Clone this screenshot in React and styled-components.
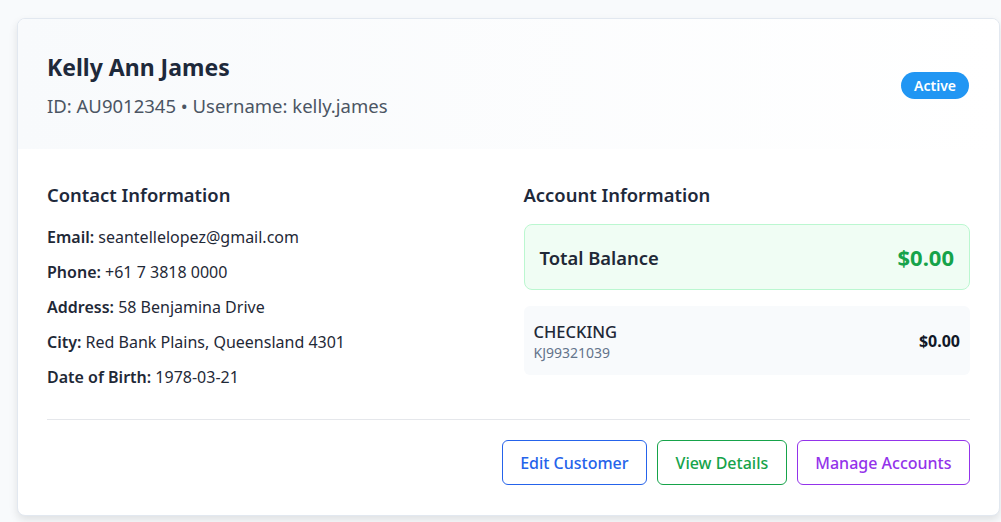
import styled, { createGlobalStyle } from "styled-components";

const Global = createGlobalStyle`
	body {
		margin: 0;
		background: #f8fafc;
		font-family: "Noto Sans", "Open Sans", sans-serif;
		color: #1f2937;
	}
`;

const Page = styled.div`
	padding: 18px 1px 6px 17px;
`;

const Card = styled.div`
	background: #ffffff;
	border: 1px solid #e2e8f0;
	border-radius: 8px;
	box-shadow: 0 4px 8px rgba(0, 0, 0, 0.1);
	overflow: hidden;
`;

const Header = styled.div`
	display: flex;
	align-items: center;
	justify-content: space-between;
	padding: 32px 30px 30px 29px;
	background: linear-gradient(90deg, #f8fafc, #ffffff);
`;

const Name = styled.h2`
	margin: 0 0 10px;
	font-size: 23px;
	line-height: 32px;
	font-weight: 700;
	color: #1e293b;
`;

const Sub = styled.p`
	margin: 0;
	font-size: 18.5px;
	line-height: 26px;
	color: #4b5563;
`;

const Badge = styled.span`
	background: #2196f3;
	color: #fff;
	font-size: 14px;
	line-height: 19px;
	font-weight: 600;
	padding: 4px 13px;
	border-radius: 999px;
`;

const Body = styled.div`
	padding: 34px 29px 30px 29px;
`;

const Columns = styled.div`
	display: grid;
	grid-template-columns: 1fr 1fr;
	gap: 30px;
`;

const SectionTitle = styled.h3`
	margin: 0 0 17px;
	font-size: 18.4px;
	line-height: 24px;
	font-weight: 600;
	color: #1e293b;
`;

const List = styled.div`
	display: flex;
	flex-direction: column;
	gap: 8px;
`;

const Line = styled.p`
	margin: 0;
	font-size: 16px;
	line-height: 27px;
	color: #1f2937;
	b {
		font-weight: 600;
	}
`;

const Total = styled.div`
	display: flex;
	justify-content: space-between;
	align-items: center;
	height: 66px;
	box-sizing: border-box;
	padding: 0 15px;
	background: #f0fdf4;
	border: 1px solid #bbf7d0;
	border-radius: 8px;
	margin-bottom: 16px;
`;

const TotalLabel = styled.span`
	font-size: 18.4px;
	font-weight: 600;
`;

const TotalValue = styled.span`
	font-size: 22px;
	font-weight: 700;
	color: #16a34a;
`;

const Account = styled.div`
	display: flex;
	justify-content: space-between;
	align-items: center;
	height: 69px;
	box-sizing: border-box;
	padding: 0 10px;
	background: #f8fafc;
	border-radius: 6px;
`;

const AccType = styled.div`
	font-size: 16.5px;
	font-weight: 500;
`;

const AccNo = styled.div`
	font-size: 14px;
	color: #64748b;
`;

const AccValue = styled.span`
	font-size: 16px;
	font-weight: 700;
	color: #111827;
`;

const Divider = styled.hr`
	border: none;
	border-top: 1px solid #e5e7eb;
	margin: 28px 0 20px;
`;

const Actions = styled.div`
	display: flex;
	justify-content: flex-end;
	gap: 10px;
`;

const Button = styled.button`
	height: 45px;
	padding: 0 17.5px;
	background: #fff;
	border: 1px solid ${(p) => p.$color};
	color: ${(p) => p.$color};
	border-radius: 6px;
	font-family: inherit;
	font-size: 16px;
	font-weight: 500;
	cursor: pointer;
`;

export default function App() {
	return (
		<Page>
			<Global />
			<Card>
				<Header>
					<div>
						<Name>Kelly Ann James</Name>
						<Sub>ID: AU9012345 • Username: kelly.james</Sub>
					</div>
					<Badge>Active</Badge>
				</Header>
				<Body>
					<Columns>
						<div>
							<SectionTitle>Contact Information</SectionTitle>
							<List>
								<Line><b>Email:</b> seantellelopez@gmail.com</Line>
								<Line><b>Phone:</b> +61 7 3818 0000</Line>
								<Line><b>Address:</b> 58 Benjamina Drive</Line>
								<Line><b>City:</b> Red Bank Plains, Queensland 4301</Line>
								<Line><b>Date of Birth:</b> 1978-03-21</Line>
							</List>
						</div>
						<div>
							<SectionTitle>Account Information</SectionTitle>
							<Total>
								<TotalLabel>Total Balance</TotalLabel>
								<TotalValue>$0.00</TotalValue>
							</Total>
							<Account>
								<div>
									<AccType>CHECKING</AccType>
									<AccNo>KJ99321039</AccNo>
								</div>
								<AccValue>$0.00</AccValue>
							</Account>
						</div>
					</Columns>
					<Divider />
					<Actions>
						<Button $color="#2563eb">Edit Customer</Button>
						<Button $color="#16a34a">View Details</Button>
						<Button $color="#9333ea">Manage Accounts</Button>
					</Actions>
				</Body>
			</Card>
		</Page>
	);
}
